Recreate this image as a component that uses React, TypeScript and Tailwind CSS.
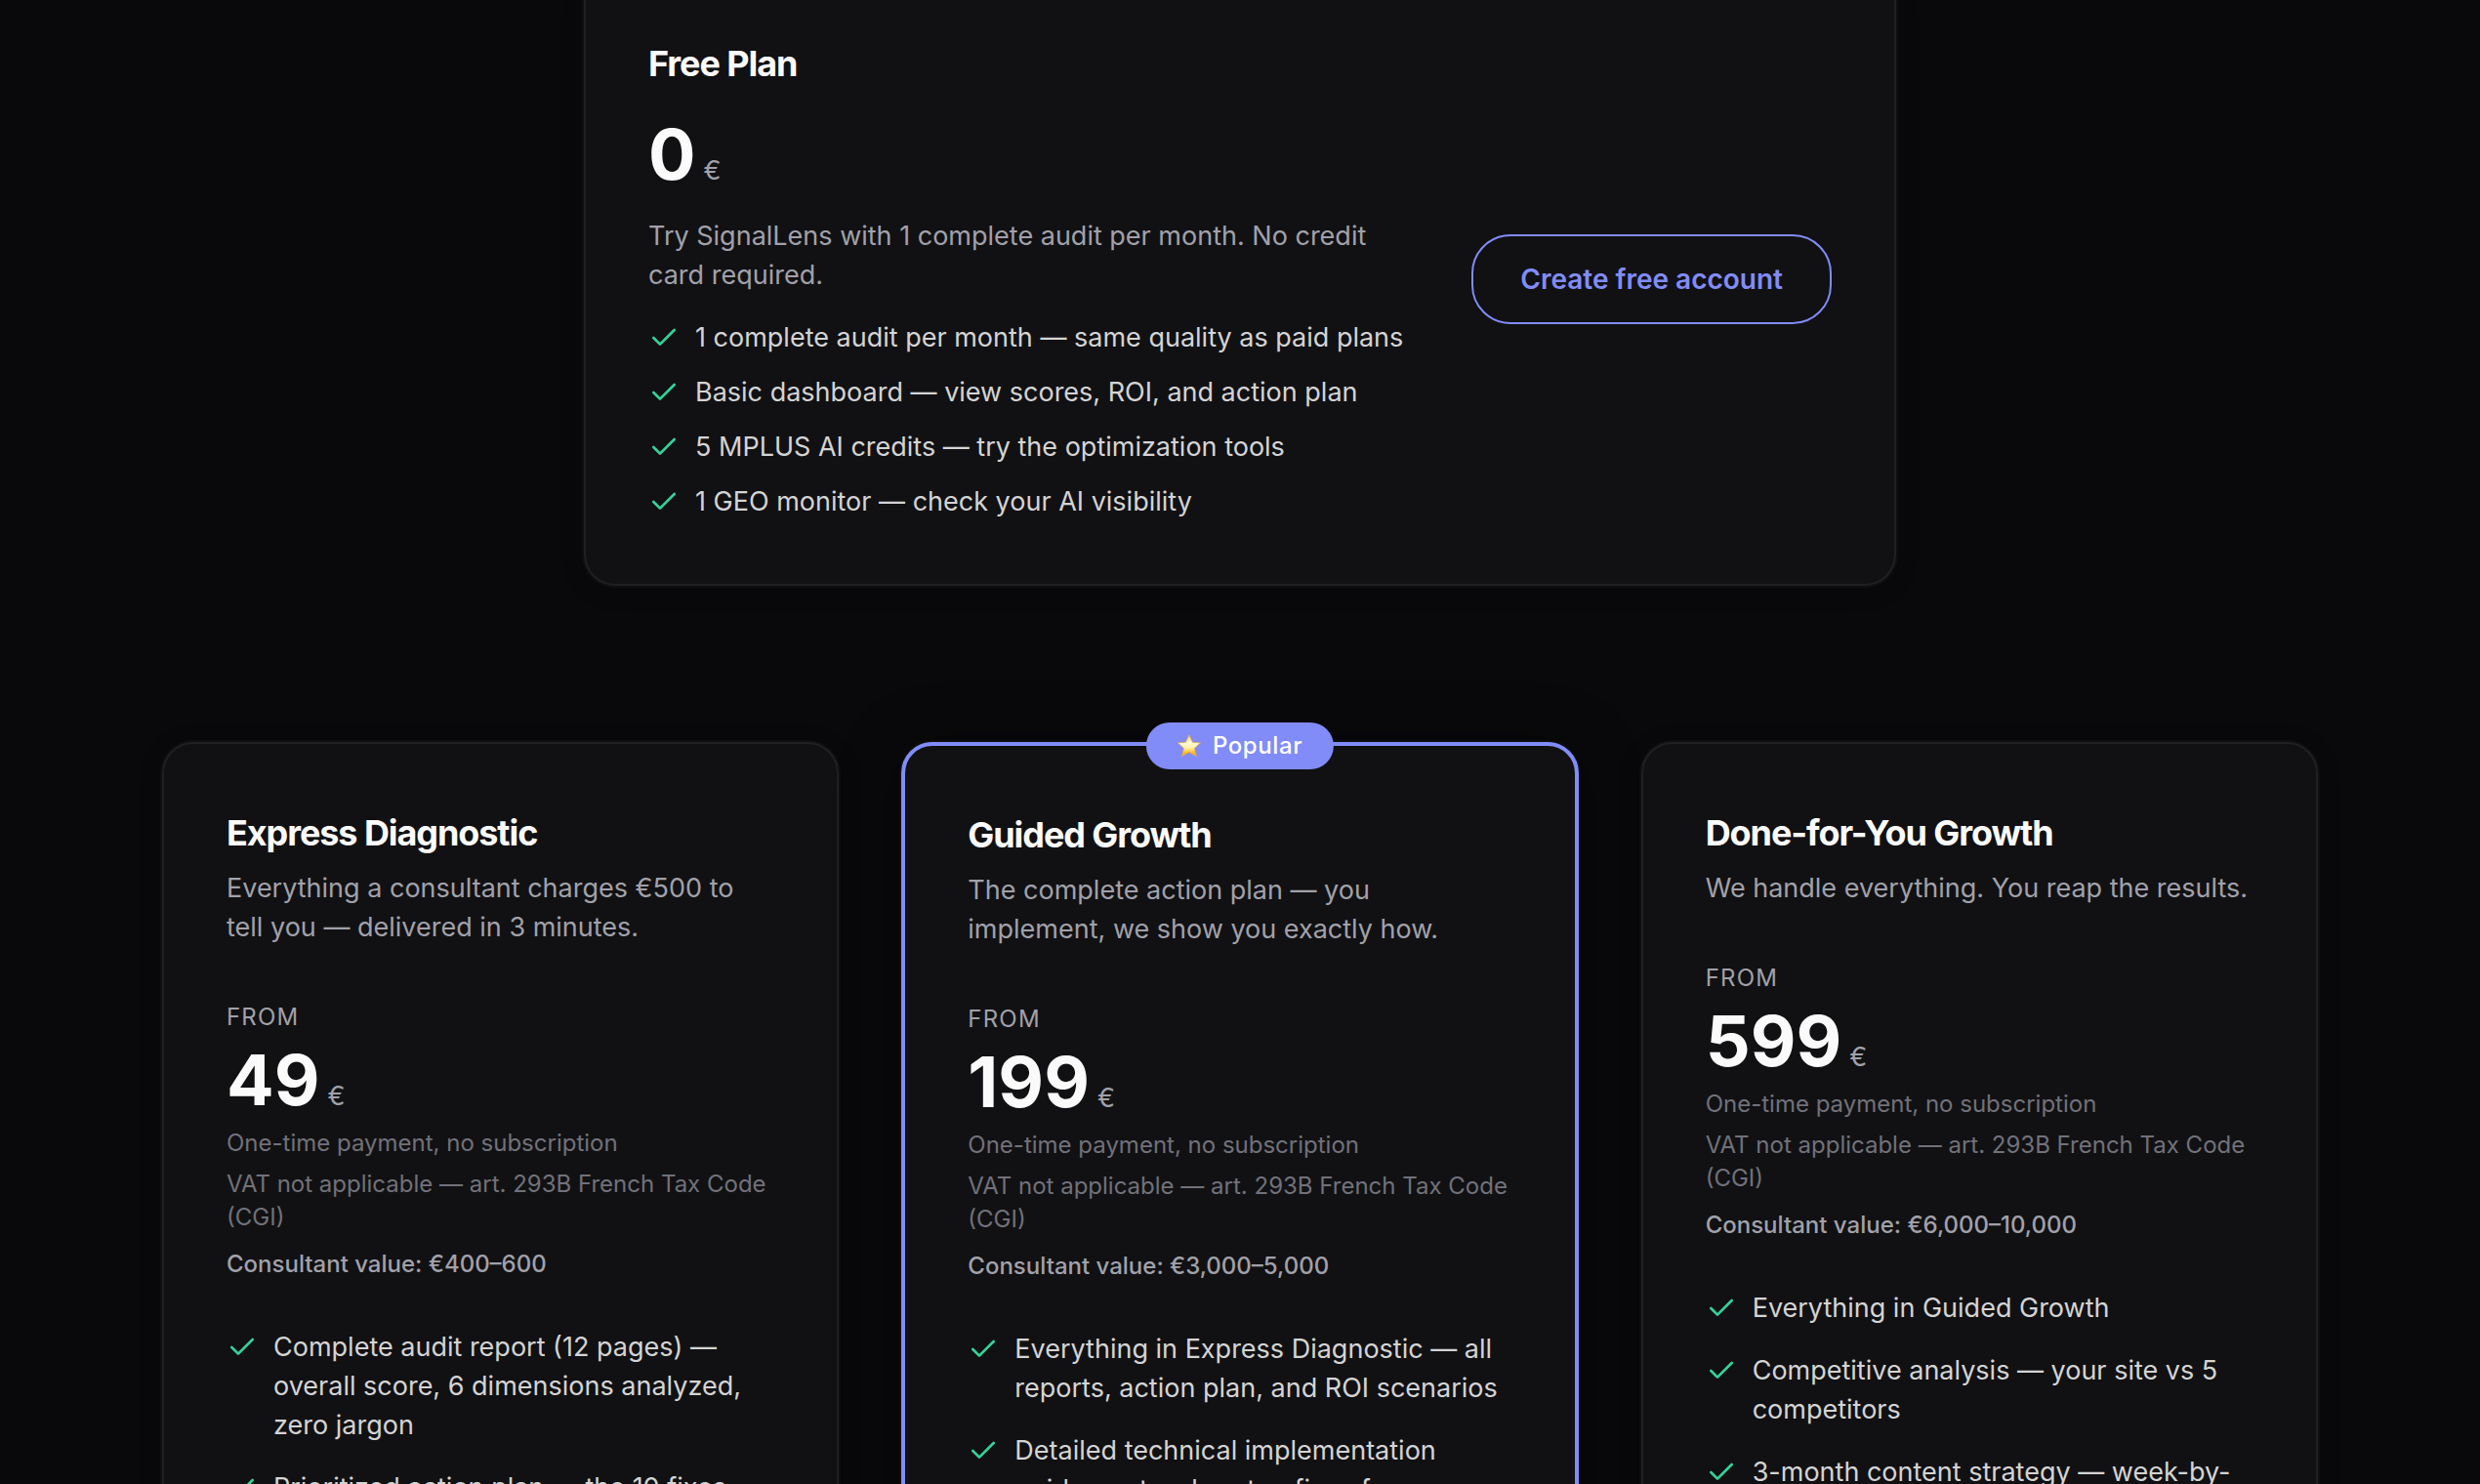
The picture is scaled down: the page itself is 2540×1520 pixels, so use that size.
import React from 'react';
import { Check } from 'lucide-react';

interface Plan {
    name: string;
    tagline: string;
    price: string;
    consultantValue: string;
    features: string[];
    popular?: boolean;
}

const FREE_FEATURES = [
    '1 complete audit per month — same quality as paid plans',
    'Basic dashboard — view scores, ROI, and action plan',
    '5 MPLUS AI credits — try the optimization tools',
    '1 GEO monitor — check your AI visibility'
];

const PLANS: Plan[] = [
    {
        name: 'Express Diagnostic',
        tagline: 'Everything a consultant charges €500 to tell you — delivered in 3 minutes.',
        price: '49',
        consultantValue: '€400–600',
        features: [
            'Complete audit report (12 pages) — overall score, 6 dimensions analyzed, zero jargon',
            'Prioritized action plan — the 10 fixes'
        ]
    },
    {
        name: 'Guided Growth',
        tagline: 'The complete action plan — you implement, we show you exactly how.',
        price: '199',
        consultantValue: '€3,000–5,000',
        features: [
            'Everything in Express Diagnostic — all reports, action plan, and ROI scenarios',
            'Detailed technical implementation guide — step-by-step fixes for'
        ],
        popular: true
    },
    {
        name: 'Done-for-You Growth',
        tagline: 'We handle everything. You reap the results.',
        price: '599',
        consultantValue: '€6,000–10,000',
        features: [
            'Everything in Guided Growth',
            'Competitive analysis — your site vs 5 competitors',
            '3-month content strategy — week-by-week'
        ]
    }
];

const Price: React.FC<{ amount: string }> = ({ amount }) => (
    <p className="flex items-baseline gap-2">
        <span className="text-[72px] leading-20 font-bold text-[#fafafa]">{amount}</span>
        <span className="text-[27px] leading-10 text-[#a1a1aa]">€</span>
    </p>
);

const Feature: React.FC<{ text: string }> = ({ text }) => (
    <li className="flex items-start gap-4">
        <Check className="mt-1 size-8 shrink-0 text-[#34d399]" strokeWidth={2} />
        <span className="text-[27px] leading-10 text-[#d4d4d4]">{text}</span>
    </li>
);

const StarIcon = () => (
    <svg viewBox="0 0 24 24" className="size-6" aria-hidden="true">
        <defs>
            <linearGradient id="star" x1="0" y1="0" x2="0" y2="1">
                <stop offset="0" stopColor="#fbd35a" />
                <stop offset="0.35" stopColor="#fff9dc" />
                <stop offset="0.6" stopColor="#fff0a8" />
                <stop offset="0.85" stopColor="#f9b81f" />
                <stop offset="1" stopColor="#f0a010" />
            </linearGradient>
        </defs>
        <path
            d="M12 1L15.4 8.200L23.500 8.900L17.400 14.400L19.400 22.600L12 18.400L4.600 22.600L6.600 14.400L0.500 8.900L8.600 8.200Z"
            fill="url(#star)"
            stroke="#e9ae45"
            strokeWidth="0.8"
            strokeLinejoin="round"
        />
    </svg>
);

const PlanCard: React.FC<{ plan: Plan }> = ({ plan }) => (
    <article
        className={`relative rounded-[32px] bg-[#111113] p-16 ${plan.popular ? 'border-4 border-[#818cf8] shadow-[0_0_0_2px_rgba(255,255,255,0.03),0_8px_64px_rgba(0,0,0,0.4)]' : 'border-2 border-[#202022] shadow-[0_0_0_2px_rgba(255,255,255,0.03),0_4px_24px_rgba(0,0,0,0.2)]'}`}
    >
        {plan.popular && (
            <span className="absolute -top-6 left-1/2 flex h-12 -translate-x-1/2 items-center gap-3 rounded-full bg-[#818cf8] px-8 text-2xl font-medium tracking-wide text-white">
                <StarIcon />
                Popular
            </span>
        )}
        <h3 className="mb-2.5 text-[36px] leading-[54px] font-bold tracking-[-0.03em] text-[#fafafa]">{plan.name}</h3>
        <p className="mb-13 text-[27px] leading-10 text-[#a1a1aa]">{plan.tagline}</p>
        <p className="mb-1 text-2xl leading-10 tracking-wider text-[#a1a1aa]">FROM</p>
        <Price amount={plan.price} />
        <p className="mt-2 text-2xl leading-[34px] text-[#71717a]">One-time payment, no subscription</p>
        <p className="mt-2 text-2xl leading-[34px] text-[#71717a]">VAT not applicable — art. 293B French Tax Code (CGI)</p>
        <p className="mt-3.5 text-2xl leading-[34px] font-medium text-[#a1a1aa]">Consultant value: {plan.consultantValue}</p>
        <ul className="mt-12 flex flex-col gap-6">
            {plan.features.map(f => (
                <Feature key={f} text={f} />
            ))}
        </ul>
    </article>
);

export default function App() {
    return (
        <main className="h-screen overflow-hidden bg-[#09090b] font-['Inter',sans-serif]">
            {/* Free plan */}
            <section className="mx-auto max-w-[1344px] rounded-b-[32px] border-2 border-t-0 border-[#202022] bg-[#111113] px-16 pt-[38px] pb-16 shadow-[0_0_0_2px_rgba(255,255,255,0.03),0_4px_24px_rgba(0,0,0,0.2)]">
                <div className="flex items-center justify-between gap-16">
                    <div className="flex-1">
                        <h3 className="mb-[26px] text-[36px] leading-[54px] font-bold tracking-[-0.03em] text-[#fafafa]">Free Plan</h3>
                        <Price amount="0" />
                        <p className="my-6 text-[27px] leading-10 text-[#a1a1aa]">
                            Try SignalLens with 1 complete audit per month. No credit card required.
                        </p>
                        <ul className="flex flex-col gap-4">
                            {FREE_FEATURES.map(f => (
                                <Feature key={f} text={f} />
                            ))}
                        </ul>
                    </div>
                    <button className="shrink-0 rounded-[40px] border-2 border-[#818cf8] px-12 py-6 text-[28px] leading-10 font-semibold text-[#818cf8]">
                        Create free account
                    </button>
                </div>
            </section>

            {/* Paid plans */}
            <section className="mx-auto mt-40 grid max-w-[2400px] grid-cols-3 items-start gap-16 px-24">
                {PLANS.map(plan => (
                    <PlanCard key={plan.name} plan={plan} />
                ))}
            </section>
        </main>
    );
}
